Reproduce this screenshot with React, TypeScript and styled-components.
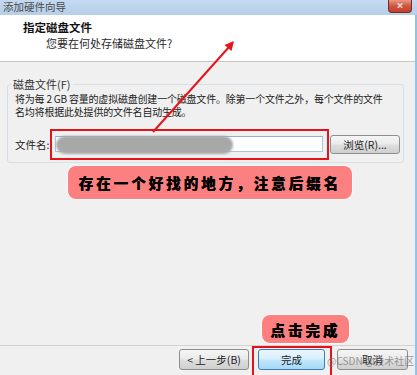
import styled, { createGlobalStyle } from "styled-components";

const GlobalStyle = createGlobalStyle`
  html, body {
    margin: 0;
    padding: 0;
    background: #f0f0f0;
  }
  body {
    font-family: "Noto Sans CJK SC", "Noto Sans", sans-serif;
    color: #1e1e1e;
  }
`;

const Page = styled.div`
  position: relative;
  width: 417px;
  height: 375px;
  display: flex;
  flex-direction: column;
  overflow: hidden;
`;

const TitleBar = styled.div`
  position: relative;
  height: 15px;
  flex-shrink: 0;
  display: flex;
  align-items: flex-start;
  padding: 0 5px 0 3px;
  background: linear-gradient(180deg, #c4d9f0 0%, #b6cee9 100%);
`;

const TitleText = styled.span`
  flex: 1;
  font-size: 10.5px;
  line-height: 13px;
  color: #4a4a4a;
`;

const CloseButton = styled.div`
  width: 24px;
  height: 13px;
  box-sizing: border-box;
  border: 1px solid #7a2a1e;
  border-top-width: 0;
  border-radius: 0 0 4px 4px;
  background: linear-gradient(180deg, #e79886 0%, #cf5540 50%, #c0412c 100%);
  color: #ffffff;
  font-family: "DejaVu Sans", sans-serif;
  font-size: 9px;
  font-weight: 700;
  line-height: 12px;
  text-align: center;
`;

const Window = styled.div`
  flex: 1;
  display: flex;
  flex-direction: column;
  border-right: 2px solid #8fc3e8;
  min-height: 0;
`;

const Header = styled.div`
  height: 41px;
  flex-shrink: 0;
  background: #ffffff;
  border-bottom: 1px solid #c4c4c4;
  padding: 5px 0 0 23px;
`;

const HeaderTitle = styled.div`
  font-size: 11.5px;
  line-height: 14px;
  font-weight: 700;
  color: #111;
`;

const HeaderSub = styled.div`
  margin: 2px 0 0 23px;
  font-size: 11px;
  line-height: 14px;
  color: #2a2a2a;
`;

const Body = styled.div`
  flex: 1;
  display: flex;
  flex-direction: column;
  padding: 15px 11px 0 7px;
`;

const GroupBox = styled.fieldset`
  margin: 0;
  padding: 0 7px 2px 7px;
  border: 1px solid #d5dfe5;
  border-radius: 3px;
  min-width: 0;
`;

const GroupLegend = styled.legend`
  margin-left: -4px;
  padding: 0 2px;
  font-size: 11px;
  line-height: 14px;
  color: #333;
`;

const Description = styled.p`
  margin: 1px 0 0;
  font-size: 10px;
  letter-spacing: -0.2px;
  line-height: 13px;
  color: #222;
  white-space: nowrap;
`;

const FileRow = styled.div`
  margin-top: 11px;
  display: flex;
  align-items: center;
`;

const FieldLabel = styled.span`
  width: 35px;
  flex-shrink: 0;
  font-size: 10.5px;
  white-space: nowrap;
  color: #222;
`;

const Highlight = styled.div`
  flex-shrink: 0;
  border: 2px solid #e4121b;
  padding: 5px 4px 6px 3px;
`;

const TextBox = styled.div`
  position: relative;
  width: 268px;
  height: 16px;
  box-sizing: border-box;
  background: #ffffff;
  border: 1px solid #a9c4db;
  border-top-color: #8fb1cc;
`;

const BlurredPath = styled.div`
  position: absolute;
  left: 0;
  top: -1px;
  width: 177px;
  height: 18px;
  border-radius: 9px;
  background: #a8a8a8;
  filter: blur(1.2px);
`;

const WinButton = styled.div<{ $width: number; $primary?: boolean }>`
  width: ${(p) => p.$width}px;
  height: 21px;
  box-sizing: border-box;
  border: 1px solid ${(p) => (p.$primary ? "#3c7fb1" : "#8e8e8e")};
  border-radius: 3px;
  background: ${(p) =>
    p.$primary
      ? "linear-gradient(180deg, #eaf6fd 0%, #d9f0fc 45%, #bee6fd 55%, #a7d9f5 100%)"
      : "linear-gradient(180deg, #f5f5f5 0%, #ebebeb 45%, #dddddd 55%, #cfcfcf 100%)"};
  display: flex;
  align-items: center;
  justify-content: center;
  font-size: 10.5px;
  white-space: nowrap;
  color: #222;
  flex-shrink: 0;
`;

const BrowseButton = styled(WinButton)`
  margin-left: 1px;
  height: 19px;
`;

const Callout = styled.div<{ $width: number; $height: number }>`
  width: ${(p) => p.$width}px;
  height: ${(p) => p.$height}px;
  flex-shrink: 0;
  box-sizing: border-box;
  background-color: #fd8080;
  border-radius: 8px;
  box-shadow: 0 0 0 1px rgba(255, 255, 255, 0.8);
  display: flex;
  align-items: center;
  justify-content: center;
`;

const CalloutText = styled.span`
  font-family: "Noto Sans CJK SC", "Noto Sans CJK TC", serif;
  font-weight: 900;
  font-size: 14.5px;
  letter-spacing: 3px;
  color: black;
  text-shadow: 0 0 0.6px #000;
  white-space: nowrap;
`;

const TipCallout = styled(Callout)`
  margin: 3px 0 0 61px;
`;

const FinishCallout = styled(Callout)`
  margin: auto 0 2px 255px;
`;

const Footer = styled.div`
  position: relative;
  height: 29px;
  flex-shrink: 0;
  border-top: 1px solid #d2d2d2;
  display: flex;
  justify-content: flex-end;
  align-items: flex-start;
  padding-right: 7px;
  overflow: hidden;
`;

const FooterButton = styled(WinButton)`
  margin-top: 3px;
`;

const FinishFrame = styled.div`
  margin: 0 5px 0 3px;
  border: 2px solid #e4121b;
  padding: 1px 5px 10px 4px;
`;

const Watermark = styled.span`
  position: absolute;
  left: 327px;
  top: 9px;
  font-size: 10px;
  line-height: 12px;
  color: rgba(110, 110, 110, 0.7);
  white-space: nowrap;
`;

const ArrowLayer = styled.svg`
  position: absolute;
  left: 0;
  top: 0;
  pointer-events: none;
`;

export default function App() {
  return (
    <>
      <GlobalStyle />
      <Page>
        <TitleBar>
          <TitleText>添加硬件向导</TitleText>
          <CloseButton>✕</CloseButton>
        </TitleBar>

        <Window>
          <Header>
            <HeaderTitle>指定磁盘文件</HeaderTitle>
            <HeaderSub>您要在何处存储磁盘文件?</HeaderSub>
          </Header>

          <Body>
            <GroupBox>
              <GroupLegend>磁盘文件(F)</GroupLegend>
              <Description>
                将为每 2 GB 容量的虚拟磁盘创建一个磁盘文件。除第一个文件之外，每个文件的文件
                <br />
                名均将根据此处提供的文件名自动生成。
              </Description>
              <FileRow>
                <FieldLabel>文件名:</FieldLabel>
                <Highlight>
                  <TextBox>
                    <BlurredPath />
                  </TextBox>
                </Highlight>
                <BrowseButton $width={70}>浏览(R)...</BrowseButton>
              </FileRow>
            </GroupBox>

            <TipCallout $width={284} $height={33}>
              <CalloutText>存在一个好找的地方，注意后缀名</CalloutText>
            </TipCallout>

            <FinishCallout $width={87} $height={28}>
              <CalloutText>点击完成</CalloutText>
            </FinishCallout>
          </Body>

          <Footer>
            <FooterButton $width={70}>&lt; 上一步(B)</FooterButton>
            <FinishFrame>
              <WinButton $width={67} $primary>
                完成
              </WinButton>
            </FinishFrame>
            <FooterButton $width={71}>取消</FooterButton>
            <Watermark>@CSDN @技术社区</Watermark>
          </Footer>
        </Window>

        <ArrowLayer width="417" height="375" viewBox="0 0 417 375">
          <line
            x1="153"
            y1="132"
            x2="229"
            y2="47"
            stroke="#e8141b"
            strokeWidth="2"
          />
          <polygon points="234,41 231.5,51 224.5,45" fill="#e8141b" />
        </ArrowLayer>
      </Page>
    </>
  );
}
